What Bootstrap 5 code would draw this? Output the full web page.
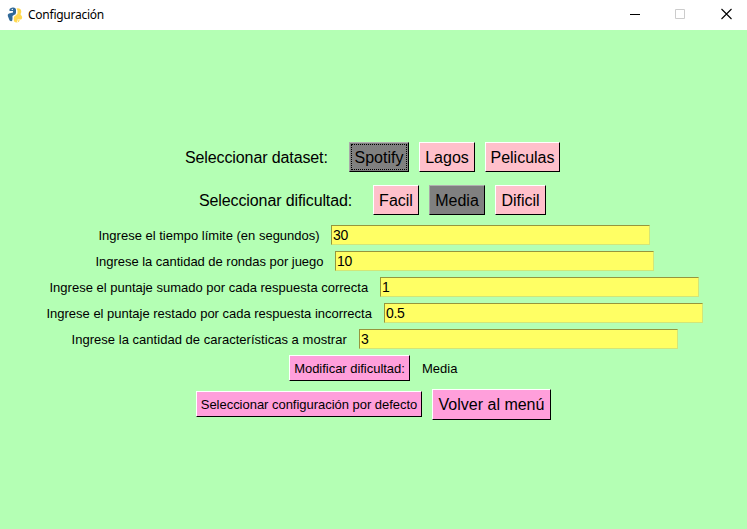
<!DOCTYPE html>
<html lang="es">
<head>
<meta charset="utf-8">
<title>Configuración</title>
<meta name="viewport" content="width=device-width, initial-scale=1">
<link href="https://cdn.jsdelivr.net/npm/bootstrap@5.3.0/dist/css/bootstrap.min.css" rel="stylesheet">
<style>
html, body { height: 100%; overflow: hidden; }
body { background: #b4ffb4; color: #000; font: 13px/18px "Liberation Sans", Arial, sans-serif; }
.titlebar { height: 30px; background: #fff; font: 12px/30px "Noto Sans", "Open Sans", sans-serif; padding-left: 7px; }
.titlebar .caption { margin-left: 5px; letter-spacing: -.25px; }
.winbtn { width: 46px; height: 30px; }
.settings { padding-top: 112px; }
.line { white-space: nowrap; }
.choice { height: 30px; margin-bottom: 13px; font-size: 16px; }
.choice + .fields { margin-top: -3px; }
.choice .name { padding-top: 2px; letter-spacing: -.11px; }
.tk { border: 1px solid; border-color: #fff #000 #000 #fff; border-radius: 0; padding: 1px 0 0; color: #000; background: #ffc0cb; font-size: 16px; line-height: 28px; height: 30px; }
.tk.active-opt { background: #808080; border-color: #b0b0b0 #000 #000 #a8a8a8; color: #000; }
.tk.focused { outline: 1px dotted #000; outline-offset: -3px; }
.tk.pinkish { background: #ff9fdb; }
.tk.tall { height: 31px; }
.tk.small-text { font-size: 13px; line-height: 25px; height: 26px; padding: 0; letter-spacing: -.03px; }
.entry { width: 319px; height: 20px; margin-bottom: 6px; padding: 0 1px; border: 1px solid; border-color: #96963c #d2e678 #d2e678 #96963c; border-radius: 0; background: #ffff64; color: #000; font: 14px/18px "Liberation Sans", Arial, sans-serif; letter-spacing: -.4px; }
.field-label { line-height: 20px; height: 20px; padding-top: 1px; }
.s1 { padding-left: 185px; } .s1 .name { width: 164px; }
.s2 { padding-left: 199px; } .s2 .name { width: 174px; }
.f1 { padding-left: 98.5px; } .f1 .field-label { width: 232.5px; }
.f2 { padding-left: 95.5px; } .f2 .field-label { width: 239.5px; letter-spacing: -.03px; }
.f3 { padding-left: 49.5px; } .f3 .field-label { width: 330.5px; }
.f4 { padding-left: 46.5px; } .f4 .field-label { width: 337.5px; letter-spacing: -.01px; }
.f5 { padding-left: 71.5px; } .f5 .field-label { width: 287.5px; letter-spacing: .03px; }
.modify { padding-left: 289px; gap: 12px; }
.modify span { padding-top: 1px; }
.final { padding-left: 196px; margin-top: 8px; gap: 10px; }
.final .small-text { margin-bottom: 1px; }
.w46 { width: 46px; } .w51 { width: 51px; } .w56 { width: 56px; } .w60 { width: 60px; } .w75 { width: 75px; }
.w119 { width: 119px; } .w121 { width: 121px; } .w226 { width: 226px; }
.gap10 { margin-right: 10px; }
</style>
</head>
<body class="m-0">
<header class="titlebar d-flex align-items-center">
  <svg width="16" height="16" viewBox="0 0 16 16" aria-hidden="true">
    <path d="M2.5 2Q4 .3 6.2.5Q9 .5 9 3V5.5Q9 7.5 7 8L5.5 9V12Q5.5 14.5 4 14.3Q2.3 14 1.8 11.5L.8 9Q.3 7 2 6.5L6 5.5V4H2.5Z" fill="#306998"/>
    <path d="M9.5 1.5Q13 .8 14 3Q15 5.5 13.5 7.2L15 9.5Q15.7 12 13.5 12.5H10.5V13.2H13Q12 15.5 9.5 15.5Q6.8 15.3 6.8 13V10.5Q7 9 9 8.2L10.5 6.5V3.5Z" fill="#ffd94f"/>
    <circle cx="5.3" cy="2.4" r=".7" fill="#fff"/><circle cx="10.5" cy="14.2" r=".6" fill="#fff"/>
  </svg>
  <span class="caption">Configuración</span>
  <div class="d-flex ms-auto">
    <svg class="winbtn" viewBox="0 0 46 30"><path d="M21 14.5H31" stroke="#000"/></svg>
    <svg class="winbtn" viewBox="0 0 46 30"><path d="M20.5 9.5H29.5V18.5H20.5Z" fill="none" stroke="#ccc"/></svg>
    <svg class="winbtn" viewBox="0 0 46 30"><path d="M20.5 9L30.5 19M30.5 9L20.5 19" stroke="#000" stroke-width="1.1"/></svg>
  </div>
</header>
<main class="settings">
  <div class="line choice d-flex align-items-center s1">
    <span class="name">Seleccionar dataset:</span>
    <button class="btn tk active-opt focused w60 gap10">Spotify</button>
    <button class="btn tk w56 gap10">Lagos</button>
    <button class="btn tk w75">Peliculas</button>
  </div>
  <div class="line choice d-flex align-items-center s2">
    <span class="name">Seleccionar dificultad:</span>
    <button class="btn tk w46 gap10">Facil</button>
    <button class="btn tk active-opt w56 gap10">Media</button>
    <button class="btn tk w51">Dificil</button>
  </div>
  <div class="fields">
    <div class="line d-flex f1"><label class="field-label" for="t1">Ingrese el tiempo límite (en segundos)</label><input id="t1" class="entry" value="30"></div>
    <div class="line d-flex f2"><label class="field-label" for="t2">Ingrese la cantidad de rondas por juego</label><input id="t2" class="entry" value="10"></div>
    <div class="line d-flex f3"><label class="field-label" for="t3">Ingrese el puntaje sumado por cada respuesta correcta</label><input id="t3" class="entry" value="1"></div>
    <div class="line d-flex f4"><label class="field-label" for="t4">Ingrese el puntaje restado por cada respuesta incorrecta</label><input id="t4" class="entry" value="0.5"></div>
    <div class="line d-flex f5"><label class="field-label" for="t5">Ingrese la cantidad de características a mostrar</label><input id="t5" class="entry" value="3"></div>
  </div>
  <div class="line d-flex align-items-center modify">
    <button class="btn tk pinkish small-text w121">Modificar dificultad:</button><span>Media</span>
  </div>
  <div class="line d-flex align-items-center final">
    <button class="btn tk pinkish small-text w226">Seleccionar configuración por defecto</button>
    <button class="btn tk pinkish tall w119">Volver al menú</button>
  </div>
</main>
<script src="https://cdn.jsdelivr.net/npm/bootstrap@5.3.0/dist/js/bootstrap.bundle.min.js"></script>
</body>
</html>
